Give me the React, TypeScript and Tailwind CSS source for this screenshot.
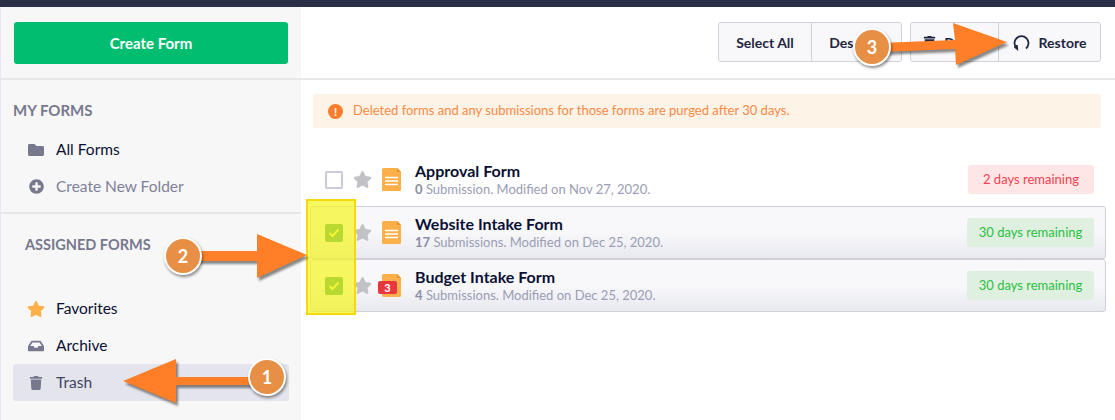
import { FaFolder, FaInbox, FaPlusCircle, FaStar, FaTrash } from 'react-icons/fa'

const FONT = { fontFamily: 'Lato, "Open Sans", sans-serif' }

function DocIcon({ badge }: { badge?: string }) {
  return (
    <div className="relative h-[23px] w-[19px] shrink-0">
      <svg width="19" height="23" viewBox="0 0 19 23">
        <path d="M1.5 0H15L19 4V21.5A1.5 1.5 0 0 1 17.5 23H1.5A1.5 1.5 0 0 1 0 21.5V1.5A1.5 1.5 0 0 1 1.5 0Z" fill="#fdb04a" />
        <path d="M15 0L19 4H15Z" fill="#e8912a" />
        {!badge && <path d="M3 9.5H16M3 13H16M3 16.500H16" stroke="#fff" strokeWidth="1.4" />}
      </svg>
      {badge && (
        <span className="absolute left-[-4px] top-[7px] flex h-[13px] w-[19px] items-center justify-center rounded-[2px] bg-[#e8363f] text-[11px] font-bold leading-none text-white">
          {badge}
        </span>
      )}
    </div>
  )
}

function FormRow({ title, count, meta, days, checked, badge, tone, boxed }: {
  title: string
  count: string
  meta: string
  days: string
  checked?: boolean
  badge?: string
  tone: 'red' | 'green'
  boxed?: boolean
}) {
  return (
    <div className={`flex h-[53px] items-center rounded-[3px] pl-[14px] pr-[11px] ${boxed ? 'border border-[#cfd0dc] bg-gradient-to-b from-[#f8f8fb] from-50% to-[#e8e9ef]' : 'border border-transparent'}`}>
      {checked ? (
        <span className="flex h-[18px] w-[18px] shrink-0 items-center justify-center rounded-[2px] bg-[#2f9461]">
          <svg width="12" height="10" viewBox="0 0 12 10"><path d="M1.500 5L4.500 8L10.500 1.500" fill="none" stroke="#f6f65c" strokeWidth="2" /></svg>
        </span>
      ) : (
        <span className="h-[18px] w-[18px] shrink-0 rounded-[2px] border-2 border-[#c9cbd8] bg-white" />
      )}
      <FaStar className="ml-[10px] shrink-0 text-[#c2c2c6]" size={19} />
      <div className="ml-[10px]"><DocIcon badge={badge} /></div>
      <div className="ml-[14px] flex-1">
        <p className="text-[16px] font-bold leading-[20px] text-[#0a1033]">{title}</p>
        <p className="text-[13px] leading-[17px] text-[#9a9db5]"><span className="font-bold text-[#8a8da6]">{count}</span> {meta}</p>
      </div>
      <span className={`flex h-[29px] items-center justify-center rounded-[3px] text-[13px] ${tone === 'red' ? 'w-[126px] bg-[#fee6e6] text-[#f6404f]' : 'w-[127px] bg-[#dff0e1] text-[#29bf3f]'}`}>
        {days}
      </span>
    </div>
  )
}

function NavItem({ icon, label, muted, active }: { icon: React.ReactNode; label: string; muted?: boolean; active?: boolean }) {
  return (
    <div className={`flex h-[37px] items-center rounded-[3px] pl-[14px] text-[15.500px] ${active ? 'bg-[#e3e4ec] text-[#3f4463]' : muted ? 'text-[#7f8199]' : 'text-[#0a1033]'}`}>
      <span className="flex w-[18px] justify-center text-[#77788d]">{icon}</span>
      <span className="ml-[11px]">{label}</span>
    </div>
  )
}

function Callout({ n, className }: { n: string; className: string }) {
  return (
    <span className={`absolute flex h-[38px] w-[38px] items-center justify-center rounded-full border-2 border-white bg-[#e68f45] text-[18px] font-bold text-white shadow-[1px_2px_3px_rgba(0,0,0,0.45)] ${className}`}>
      {n}
    </span>
  )
}

export default function App() {
  return (
    <div className="relative h-[420px] w-[1115px] overflow-hidden bg-white" style={FONT}>
      <div className="h-[7px] bg-[#2a2e47]" />
      <div className="flex h-[413px]">
        <aside className="w-[301px] shrink-0 border-l border-[#e6e9f2] bg-[#f7f7f7]">
          <div className="h-[73px] border-b-2 border-[#e8e8ea] pl-[13px] pr-[13px] pt-[15px]">
            <button className="flex h-[42px] w-full items-center justify-center rounded-[3px] bg-[#00bd6f] text-[15px] font-bold text-white">Create Form</button>
          </div>
          <div className="h-[134px] border-b-2 border-[#e8e8ea] pl-[12px] pr-[12px] pt-[20px]">
            <p className="mb-[11px] text-[15px] font-bold leading-[20px] text-[#77788d]">MY FORMS</p>
            <NavItem icon={<FaFolder size={16} />} label="All Forms" />
            <NavItem icon={<FaPlusCircle size={15} />} label="Create New Folder" muted />
          </div>
          <div className="pl-[12px] pr-[12px] pt-[21px]">
            <p className="mb-[35px] pl-[12px] text-[14.500px] font-bold leading-[20px] text-[#77788d]">ASSIGNED FORMS</p>
            <NavItem icon={<FaStar size={18} className="text-[#fdb04a]" />} label="Favorites" />
            <NavItem icon={<FaInbox size={16} />} label="Archive" />
            <NavItem icon={<FaTrash size={14} />} label="Trash" active />
          </div>
        </aside>
        <main className="flex-1">
          <header className="flex h-[73px] justify-end gap-[8px] border-b-2 border-[#e8e8ea] pr-[14px] pt-[15px]">
            <div className="flex h-[40px] rounded-[3px] border border-[#cfd2dd] bg-[#f8f8fb] text-[14px] font-bold text-[#1f2540]">
              <span className="flex w-[93px] items-center justify-center border-r border-[#cfd2dd]">Select All</span>
              <span className="flex w-[89px] items-center justify-center">Deselect</span>
            </div>
            <div className="flex h-[40px] rounded-[3px] border border-[#cfd2dd] bg-[#f8f8fb] text-[14px] font-bold text-[#1f2540]">
              <span className="flex w-[88px] items-center justify-center gap-[8px] border-r border-[#cfd2dd]"><FaTrash size={13} />Delete</span>
              <span className="flex w-[101px] items-center justify-center gap-[9px]">
                <svg width="17" height="17" viewBox="0 0 17 17" fill="none" stroke="#1f2540" strokeWidth="1.800"><path d="M4 14.500A7 7 0 1 1 13 14.500" /><path d="M1.500 12.500L4.200 14.800L3.800 11" /></svg>
                Restore
              </span>
            </div>
          </header>
          <div className="mb-[25px] ml-[12px] mr-[14px] mt-[14px] flex h-[34px] items-center rounded-[2px] bg-[#fdf3e7] pl-[15px] text-[13px] text-[#fb8a45]">
            <span className="flex h-[15px] w-[15px] items-center justify-center rounded-full bg-[#fb7d2b] text-[11px] font-bold leading-none text-white">!</span>
            <span className="ml-[10px]">Deleted forms and any submissions for those forms are purged after 30 days.</span>
          </div>
          <div className="ml-[9px] mr-[9px]">
            <FormRow title="Approval Form" count="0" meta="Submission. Modified on Nov 27, 2020." days="2 days remaining" tone="red" />
            <FormRow title="Website Intake Form" count="17" meta="Submissions. Modified on Dec 25, 2020." days="30 days remaining" tone="green" checked boxed />
            <FormRow title="Budget Intake Form" count="4" meta="Submissions. Modified on Dec 25, 2020." days="30 days remaining" badge="3" tone="green" checked boxed />
          </div>
        </main>
      </div>

      {/* annotations drawn on top of the screenshot */}
      <div className="absolute left-[306px] top-[199px] h-[116px] w-[50px] border-2 border-[#f5d90a] bg-[#f5f51e]/70" />
      <svg className="absolute left-0 top-0 drop-shadow-[2px_3px_1px_rgba(0,0,0,0.45)]" width="1115" height="420" viewBox="0 0 1115 420" fill="#fe7f27">
        <path d="M123 381L176 359V377H255V385H176V403Z" />
        <path d="M190 251H257V234L307 255L257 278V261H190Z" />
        <path d="M880 43L955 40L953 23L1007 42L956 65L955 49L880 52Z" />
      </svg>
      <Callout n="1" className="left-[248px] top-[358px]" />
      <Callout n="2" className="left-[164px] top-[237px]" />
      <Callout n="3" className="left-[853px] top-[28px]" />
    </div>
  )
}
